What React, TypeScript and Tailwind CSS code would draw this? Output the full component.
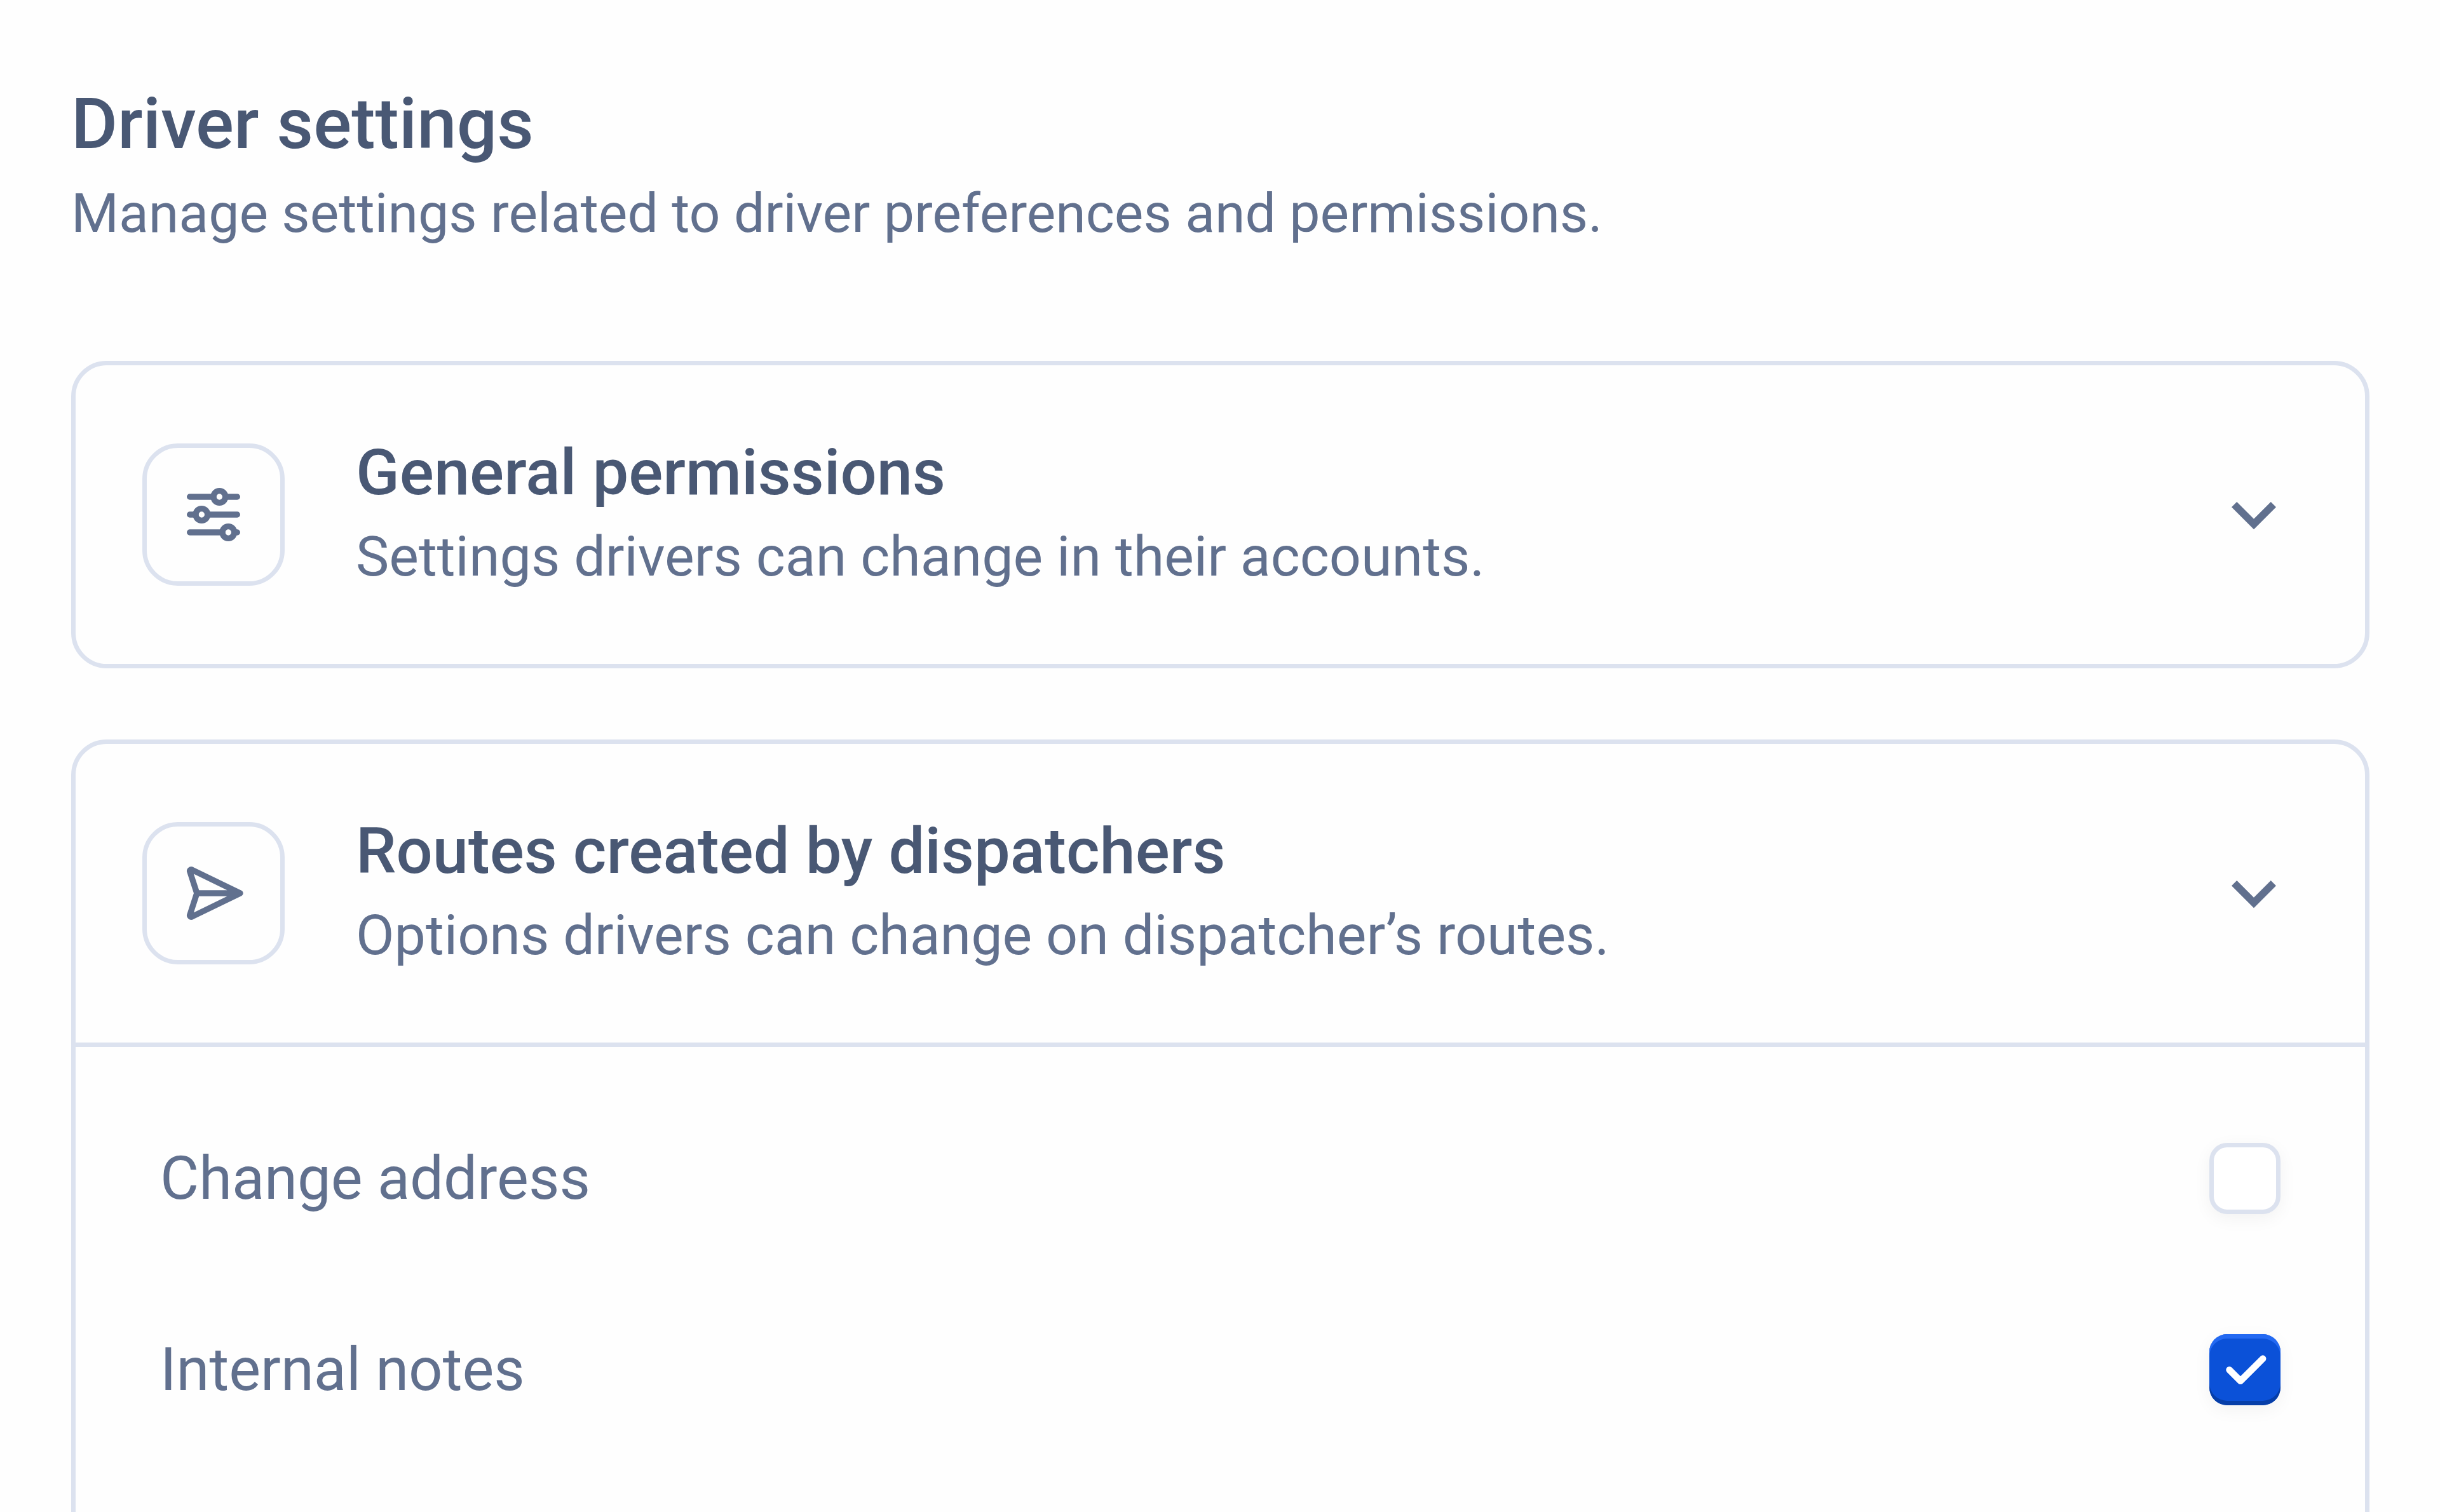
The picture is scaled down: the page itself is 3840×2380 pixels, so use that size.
import { useId, useState, type ReactNode } from "react";

function SlidersIcon() {
  return (
    <svg
      viewBox="0 0 24 24"
      className="size-28"
      fill="none"
      stroke="currentColor"
      strokeWidth={2}
      strokeLinecap="round"
      aria-hidden="true"
    >
      <path d="M4 6h8M16 6h4M4 12h2M10 12h10M4 18h11M19 18h1" />
      <circle cx="14" cy="6" r="2" />
      <circle cx="8" cy="12" r="2" />
      <circle cx="17" cy="18" r="2" />
    </svg>
  );
}

function SendIcon() {
  return (
    <svg
      viewBox="0 0 24 24"
      className="size-28"
      fill="none"
      stroke="currentColor"
      strokeWidth={2}
      strokeLinecap="round"
      strokeLinejoin="round"
      aria-hidden="true"
    >
      <path d="M6.4 12 4.05 4.75a.5.5 0 0 1 .7-.65L21 12 4.75 19.9a.5.5 0 0 1-.7-.65L6.4 12H19" />
    </svg>
  );
}

function ChevronIcon() {
  return (
    <svg viewBox="0 0 24 24" className="size-[140px] shrink-0" fill="currentColor" aria-hidden="true">
      <path d="M7.41 8.59 12 13.17l4.59-4.58L18 10l-6 6-6-6z" />
    </svg>
  );
}

function CheckRow({ label, initial }: { label: string; initial: boolean }) {
  const id = useId();
  const [checked, setChecked] = useState(initial);
  return (
    <div className="flex items-center justify-between">
      <label htmlFor={id} className="text-[94px] leading-[112px]">
        {label}
      </label>
      <span className="grid shrink-0">
        <input
          id={id}
          type="checkbox"
          checked={checked}
          onChange={(e) => setChecked(e.target.checked)}
          className="col-start-1 row-start-1 size-28 appearance-none rounded-[28px] border-[7px] border-[#dce2ef] bg-white shadow-[0_7px_28px_rgba(0,0,0,0.05)] checked:border-0 checked:bg-[#0b51d8] checked:shadow-[inset_0_7px_0_#2369f2,inset_0_-7px_0_#063ea8,0_7px_28px_rgba(0,0,0,0.05)]"
        />
        {checked && (
          <svg
            viewBox="0 0 112 112"
            className="pointer-events-none col-start-1 row-start-1 size-28"
            fill="none"
            stroke="white"
            strokeWidth={10.5}
            strokeLinecap="round"
            strokeLinejoin="round"
            aria-hidden="true"
          >
            <path d="M31.5 56.3 49 73.8 84.2 38.6" />
          </svg>
        )}
      </span>
    </div>
  );
}

type SectionProps = {
  icon: ReactNode;
  title: string;
  description: string;
  defaultOpen?: boolean;
  children?: ReactNode;
};

function Section({ icon, title, description, defaultOpen = false, children }: SectionProps) {
  const [open, setOpen] = useState(defaultOpen);
  const expanded = open && Boolean(children);
  return (
    <section className="shrink-0 rounded-[56px] border-[7px] border-[#dce2ef]">
      <button
        type="button"
        aria-expanded={expanded}
        onClick={() => setOpen(!open)}
        className="flex w-full items-center gap-28 px-[105px] py-[103px] text-left"
      >
        <span className="grid size-56 shrink-0 place-items-center rounded-[56px] border-[7px] border-[#dce2ef]">
          {icon}
        </span>
        <span className="flex grow flex-col">
          <span className="text-[101px] leading-[132px] font-medium text-[#495874]">{title}</span>
          <span className="text-[88px] leading-[132px]">{description}</span>
        </span>
        <ChevronIcon />
      </button>
      {expanded && (
        <div className="flex flex-col gap-[189px] border-t-[7px] border-[#dce2ef] px-[133px] pt-[151px] pb-[301px]">
          {children}
        </div>
      )}
    </section>
  );
}

export default function App() {
  return (
    <main className="flex h-screen flex-col overflow-hidden bg-[#fefefe] pr-[111px] pl-28 pt-[121px] font-['Roboto',sans-serif] text-[#61708e]">
      <header>
        <h1 className="text-[112px] leading-[148px] font-medium text-[#495874]">Driver settings</h1>
        <p className="text-[86px] leading-[134px]">
          Manage settings related to driver preferences and permissions.
        </p>
      </header>
      <div className="mt-[165px] flex flex-col gap-28">
        <Section
          icon={<SlidersIcon />}
          title="General permissions"
          description="Settings drivers can change in their accounts."
        />
        <Section
          icon={<SendIcon />}
          title="Routes created by dispatchers"
          description="Options drivers can change on dispatcher’s routes."
          defaultOpen
        >
          <CheckRow label="Change address" initial={false} />
          <CheckRow label="Internal notes" initial />
        </Section>
      </div>
    </main>
  );
}
